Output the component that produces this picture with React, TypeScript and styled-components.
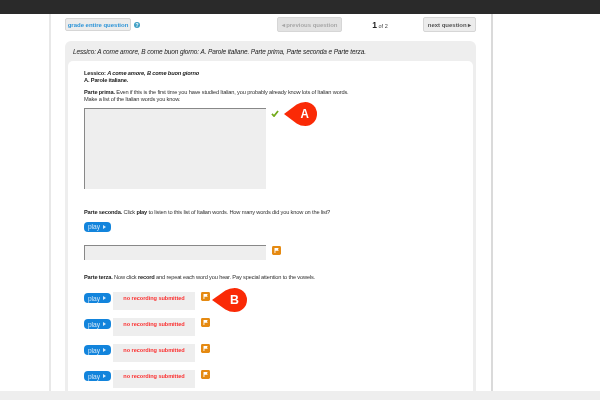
import React from "react";
import styled, { createGlobalStyle } from "styled-components";

const Global = createGlobalStyle`
  html, body { margin: 0; padding: 0; background: #fff; }
  body { font-family: "Liberation Sans", Arial, sans-serif; color: #222; }
`;
const Page = styled.div`
  width: 600px; height: 400px; overflow: hidden; display: flex; flex-direction: column; background: #fff;
  filter: blur(0.3px);
`;
const TopBar = styled.div`height: 14px; flex: none; background: #2a2a2a;`;
const Middle = styled.div`flex: 1; min-height: 0; overflow: hidden; padding-left: 49px;`;
const Column = styled.main`
  width: 444px; height: 100%; border-left: 2px solid #e8e8e8; border-right: 2px solid #dadada;
  padding: 3px 15px 0 14px; display: flex; flex-direction: column; box-sizing: border-box;
`;
const Footer = styled.div`height: 9px; flex: none; background: #eee;`;
const Toolbar = styled.div`display: flex; align-items: center; height: 15px; flex: none;`;
const Btn = styled.button<{ $w: number; $dim?: boolean; $blue?: boolean }>`
  width: ${p => p.$w}px; height: 15px; padding: 0; border: 1px solid #d6d6d6; border-radius: 2px;
  background: ${p => (p.$dim ? "#e2e2e2" : "#ececec")};
  color: ${p => (p.$blue ? "#2f95d8" : p.$dim ? "#a8a8a8" : "#555")};
  font: bold 6px "Liberation Sans", sans-serif; letter-spacing: -0.02px; white-space: nowrap; flex: none;
`;
const GradeBtn = styled(Btn)`height: 13px;`;
const Help = styled.span`
  width: 6px; height: 6px; border-radius: 50%; background: #3d9fc4; color: #fff;
  font: bold 5px/6px "Liberation Sans", sans-serif; text-align: center; margin-left: 3px;
`;
const Spacer = styled.div<{ $w: number }>`width: ${p => p.$w}px; flex: none;`;
const Count = styled.div`width: 81px; flex: none; text-align: center; font-size: 5.5px; color: #444; padding-right: 5px; box-sizing: border-box;
  b { font-size: 8.5px; font-weight: bold; color: #222; }
`;
const Panel = styled.section`
  margin-top: 9px; width: 411px; flex: 1; min-height: 0; background: #eee; border-radius: 6px 6px 0 0;
  padding: 0 3px; box-sizing: border-box; display: flex; flex-direction: column;
`;
const PanelTitle = styled.div`
  height: 20px; flex: none; line-height: 22px; padding-left: 5px; font-size: 6.5px; letter-spacing: -0.12px; font-style: italic; color: #222; white-space: nowrap;
`;
const Inner = styled.div`
  flex: 1; min-height: 0; background: #fff; border-radius: 5px 5px 0 0; padding: 9px 0 0 16px; position: relative; overflow: hidden;
`;
const Para = styled.p<{ $top?: number }>`
  margin: ${p => p.$top ?? 0}px 0 0; font-size: 5.7px; letter-spacing: -0.17px; line-height: 6.7px; color: #333; white-space: nowrap;
  b { color: #222; }
`;
const BigArea = styled.div`
  margin-top: 5px; width: 182px; height: 81px; background: #eee; border: 1px solid #888; border-right: 0; border-bottom: 0; box-sizing: border-box;
`;
const Row = styled.div<{ $top: number }>`
  display: flex; align-items: flex-start; margin-top: ${p => p.$top}px; height: 18px;
`;
const Play = styled.span`
  width: 27px; height: 10px; border-radius: 4px; background: #1284dc; color: #cfe6f8; flex: none;
  font-size: 6.6px; line-height: 9px; display: flex; align-items: center; justify-content: center; gap: 3px; margin-top: 1px; padding-right: 1px; box-sizing: border-box;
  i { width: 0; height: 0; border-left: 3px solid #d5e9fa; border-top: 2px solid transparent; border-bottom: 2px solid transparent; }
`;
const PlayAlone = styled(Play)`display: flex; margin-top: 6px;`;
const ShortInput = styled.div`
  margin-top: 13px; width: 182px; height: 15px; background: #eee; border: 1px solid #888; border-right: 0; border-bottom: 0; box-sizing: border-box; flex: none;
`;
const InputRow = styled.div`display: flex; align-items: flex-start;`;
const Flag = styled.svg<{ $l: number; $t?: number }>`
  width: 9px; height: 9px; margin-left: ${p => p.$l}px; margin-top: ${p => p.$t ?? 0}px; flex: none;
`;
const NoRec = styled.div`
  margin-left: 2px; width: 82px; height: 18px; background: #eee; color: #fb3030; font-size: 5.6px; letter-spacing: -0.05px; font-weight: bold; text-align: center; line-height: 12px; white-space: nowrap; flex: none;
`;
const Marker = styled.svg<{ $x: number; $y: number; $w: number; $h: number }>`
  position: absolute; left: ${p => p.$x}px; top: ${p => p.$y}px; width: ${p => p.$w}px; height: ${p => p.$h}px;
`;
const Check = styled.svg`position: absolute; left: 203px; top: 49px; width: 8px; height: 7px;`;
const MarkerLetter = styled.text`font: bold 12px "Liberation Sans", sans-serif; fill: #fff;`;

const FlagIcon = ({ l, t }: { l: number; t?: number }) => (
  <Flag $l={l} $t={t} viewBox="0 0 9 9">
    <rect width="9" height="9" rx="1.4" fill="#e58a12" />
    <path d="M2.5 2h4.2L6 3.3l.7 1.4H3.4V7H2.5Z" fill="#fff" />
  </Flag>
);
const PlayBtn = () => <Play>play<i /></Play>;

const Rec = ({ top }: { top: number }) => (
  <Row $top={top}>
    <PlayBtn />
    <NoRec>no recording submitted</NoRec>
    <FlagIcon l={6} />
  </Row>
);

const MARKER_PATH = "M0 12 13 2.5Q17 0 22 0a12 12 0 0 1 0 24q-5 0-9-2.5Z";

export default function App() {
  return (
    <Page>
      <Global />
      <TopBar />
      <Middle>
        <Column>
          <Toolbar>
            <GradeBtn $w={66} $blue>grade entire question</GradeBtn>
            <Help>?</Help>
            <Spacer $w={137} />
            <Btn $w={65} $dim>◂ previous question</Btn>
            <Count><b>1</b> of 2</Count>
            <Btn $w={53}>next question ▸</Btn>
          </Toolbar>
          <Panel>
            <PanelTitle>Lessico: A come amore, B come buon giorno: A. Parole italiane. Parte prima, Parte seconda e Parte terza.</PanelTitle>
            <Inner>
              <Para><b>Lessico: <i>A come amore, B come buon giorno</i></b><br /><b>A. Parole italiane.</b></Para>
              <Para $top={6}><b>Parte prima.</b> Even if this is the first time you have studied Italian, you probably already know lots of Italian words.<br />Make a list of the Italian words you know.</Para>
              <BigArea />
              <Para $top={20}><b>Parte seconda.</b> Click <b>play</b> to listen to this list of Italian words. How many words did you know on the list?</Para>
              <PlayAlone>play<i /></PlayAlone>
              <InputRow>
                <ShortInput />
                <FlagIcon l={6} t={14} />
              </InputRow>
              <Para $top={14}><b>Parte terza.</b> Now click <b>record</b> and repeat each word you hear. Pay special attention to the vowels.</Para>
              <Rec top={12} />
              <Rec top={8} />
              <Rec top={8} />
              <Rec top={8} />
              <Check viewBox="0 0 9 8"><path d="M1 4.5 3.4 7 8 1.2" fill="none" stroke="#74ab1c" strokeWidth="2" /></Check>
              <Marker $x={216} $y={41} $w={33} $h={24} viewBox="0 0 34 24" preserveAspectRatio="none">
                <path d={MARKER_PATH} fill="#fa2a06" />
                <MarkerLetter x="17" y="16.5">A</MarkerLetter>
              </Marker>
              <Marker $x={144} $y={227} $w={35} $h={24} viewBox="0 0 34 24" preserveAspectRatio="none">
                <path d={MARKER_PATH} fill="#fa2a06" />
                <MarkerLetter x="17.5" y="16.5">B</MarkerLetter>
              </Marker>
            </Inner>
          </Panel>
        </Column>
      </Middle>
      <Footer />
    </Page>
  );
}
